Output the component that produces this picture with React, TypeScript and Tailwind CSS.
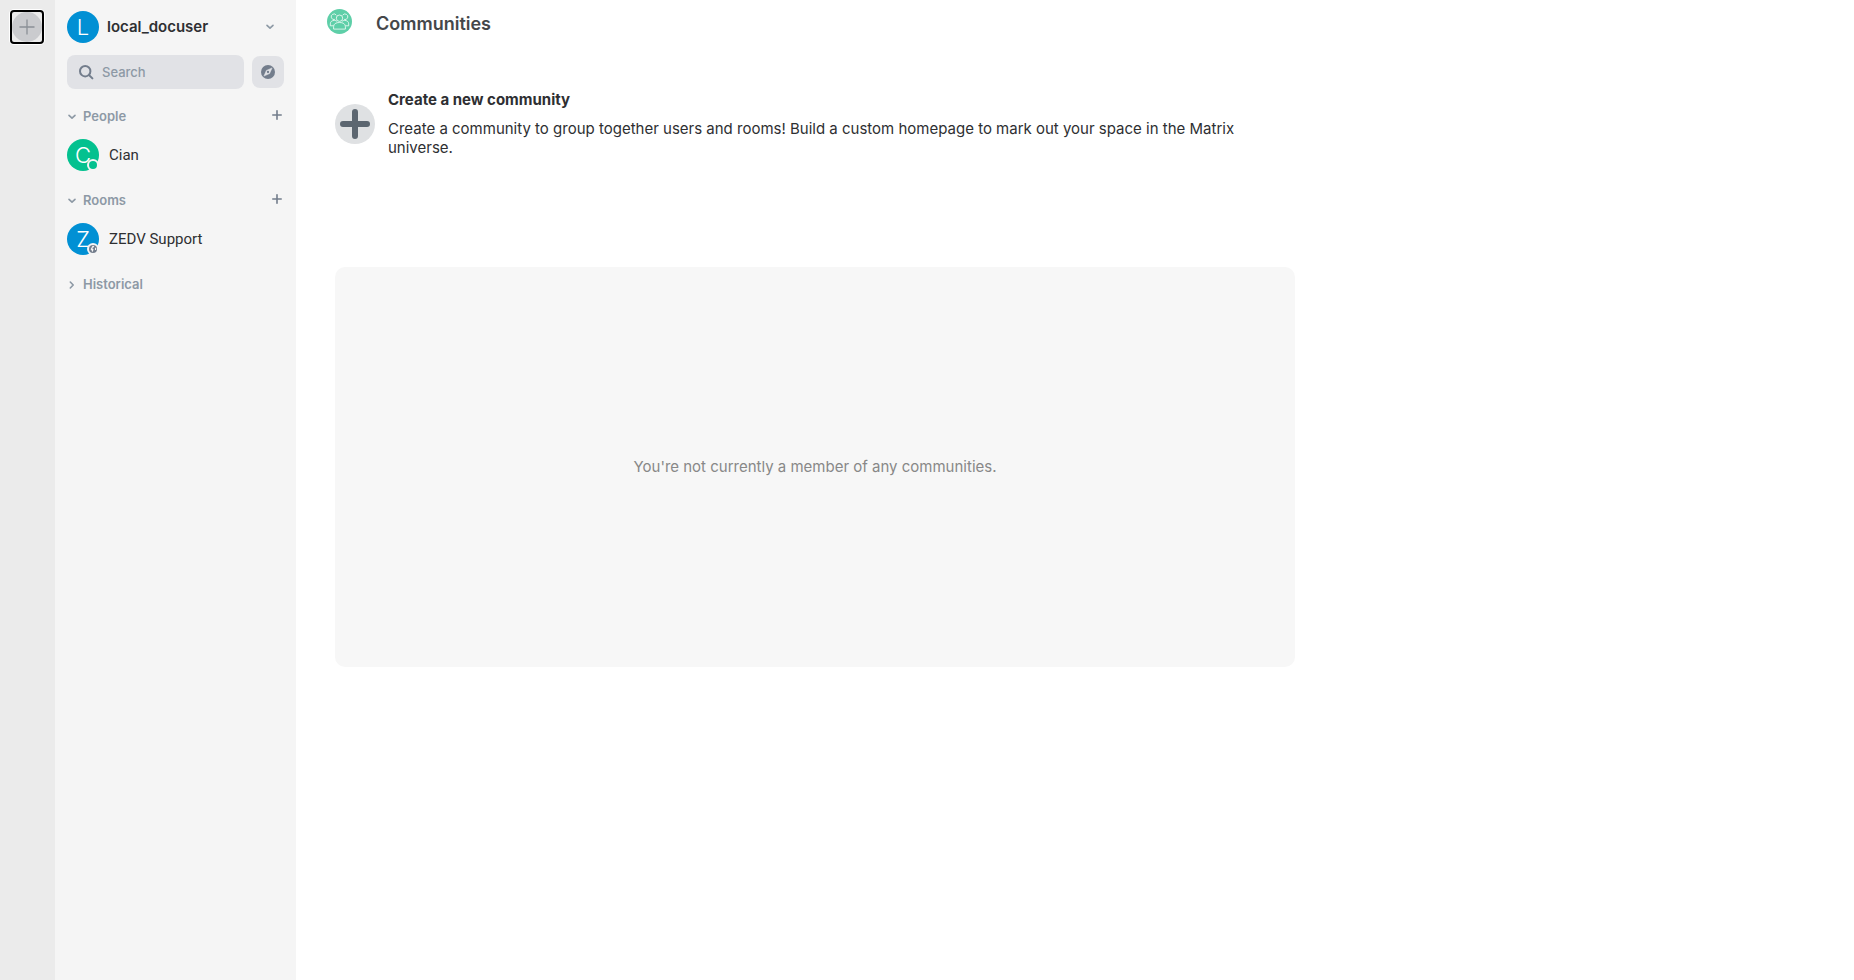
import { useState } from "react";
import type { ReactNode } from "react";

function ChevronIcon({ open = true }: { open?: boolean }) {
  return (
    <svg
      viewBox="0 0 10 10"
      className={open ? "size-[10px] shrink-0" : "size-[10px] shrink-0 -rotate-90"}
      fill="none"
      stroke="currentColor"
      strokeWidth="1.6"
      strokeLinecap="round"
      strokeLinejoin="round"
    >
      <path d="M2 3.3 5 6.2 8 3.3" />
    </svg>
  );
}

function PlusIcon() {
  return (
    <svg viewBox="0 0 10 10" className="size-[10px]" fill="none" stroke="currentColor" strokeWidth="1.6" strokeLinecap="round">
      <path d="M5 .8v8.4M.8 5h8.4" />
    </svg>
  );
}

function SearchIcon() {
  return (
    <svg viewBox="0 0 16 16" className="size-4 shrink-0 text-[#737d8c]" fill="none" stroke="currentColor" strokeWidth="2" strokeLinecap="round">
      <circle cx="7.2" cy="7.2" r="5.2" />
      <path d="m11.2 11.2 3.2 3.2" />
    </svg>
  );
}

function CompassIcon() {
  return (
    <svg viewBox="0 0 14 14" className="size-[14px]">
      <circle cx="7" cy="7" r="7" fill="#737d8c" />
      <path d="M11.1 2.9 8.6 8.6 2.9 11.1 5.4 5.4Z" fill="#e1e2e6" stroke="#e1e2e6" strokeWidth=".5" strokeLinejoin="round" />
      <circle cx="7" cy="7" r="1.15" fill="#737d8c" />
    </svg>
  );
}

function GlobeIcon() {
  return (
    <svg viewBox="0 0 8 8" className="size-2">
      <circle cx="4" cy="4" r="4" fill="#737d8c" />
      <path d="M3.6.8 5.2 1 4.8 2.2 3.6 2.8 3.4 3.6 4.6 4.4 4.2 5.6 3.2 7.2 2.6 5.2 1.6 4.2Z" fill="#f5f5f5" />
      <path d="M6 2.6 7.2 3.2 7 4.9 6 5Z" fill="#f5f5f5" />
    </svg>
  );
}

function CommunitiesIcon() {
  return (
    <svg viewBox="0 0 25 25" className="size-[25px] shrink-0" fill="none" stroke="#fff" strokeOpacity=".85" strokeWidth=".9" strokeLinejoin="round">
      <circle cx="12.5" cy="12.5" r="12.5" fill="#5ecfa8" stroke="none" />
      <circle cx="12.5" cy="9.2" r="3.2" />
      <path d="M6.6 20.1v-2.4c0-2.9 2.4-4.2 5.9-4.2s5.9 1.3 5.9 4.2v2.4Z" />
      <path d="M9.4 6.3A2.8 2.8 0 1 0 7.9 10.4M15.6 6.3A2.8 2.8 0 1 1 17.1 10.4" />
      <path d="M6.5 16.8H3.3v-1.9c0-2.2 1.6-3.4 4-3.5 1.2 0 2 .3 2.6 .9M18.5 16.8H21.7v-1.9c0-2.2-1.6-3.4-4-3.5-1.2 0-2 .3-2.6 .9" />
    </svg>
  );
}

function Avatar({ letter, color, children }: { letter: string; color: string; children?: ReactNode }) {
  return (
    <span
      className={`relative flex size-8 shrink-0 items-center justify-center rounded-full text-[22px] leading-8 font-light text-white ${color}`}
    >
      {letter}
      {children && (
        <span className="absolute right-0 bottom-0 flex size-3 items-center justify-center rounded-full bg-[#f5f5f5]">
          {children}
        </span>
      )}
    </span>
  );
}

function RoomSection({ title, children }: { title: string; children: ReactNode }) {
  const [open, setOpen] = useState(true);

  return (
    <section className="mb-[14px]">
      <div className="flex h-6 items-center justify-between pr-[2px]">
        <button onClick={() => setOpen(!open)} className="flex items-center gap-[6px] text-[13px] font-semibold text-[#8d99a5]">
          <ChevronIcon open={open} />
          {title}
        </button>
        <button aria-label={`Add to ${title}`} className="pb-1 text-[#737d8c]">
          <PlusIcon />
        </button>
      </div>
      {open && children}
    </section>
  );
}

function RoomTile({ name, avatar }: { name: string; avatar: ReactNode }) {
  return (
    <button className="mt-[6px] flex h-10 w-full items-center gap-[10px] text-left text-[15px] text-[#2e2f32]">
      {avatar}
      <span className="font-['Roboto',sans-serif]">{name}</span>
    </button>
  );
}

function LeftPanel() {
  return (
    <aside className="w-[241px] shrink-0 bg-[#f5f5f5] px-3 pt-[11px]">
      <button className="flex w-full items-center pr-[9px] text-left">
        <Avatar letter="L" color="bg-[#0190d4]" />
        <span className="ml-2 flex-1 text-[15px] font-semibold text-[#2e2f32]">local_docuser</span>
        <span className="text-[#8d99a5]">
          <ChevronIcon />
        </span>
      </button>

      <div className="mt-3 mb-4 flex items-center gap-2">
        <label className="flex h-[34px] min-w-0 flex-1 items-center gap-2 rounded-lg bg-[#e1e2e6] pl-[11px]">
          <SearchIcon />
          <input
            type="text"
            placeholder="Search"
            aria-label="Search"
            className="w-full min-w-0 bg-transparent pt-px text-[13px] font-medium text-[#2e2f32] outline-none placeholder:text-[#8d99a5]"
          />
        </label>
        <button aria-label="Explore rooms" className="flex size-8 items-center justify-center rounded-lg bg-[#e1e2e6]">
          <CompassIcon />
        </button>
      </div>

      <RoomSection title="People">
        <RoomTile
          name="Cian"
          avatar={
            <Avatar letter="C" color="bg-[#03c18f]">
              <span className="size-2 rounded-full bg-[#03c18f]" />
            </Avatar>
          }
        />
      </RoomSection>
      <RoomSection title="Rooms">
        <RoomTile
          name="ZEDV Support"
          avatar={
            <Avatar letter="Z" color="bg-[#0190d4]">
              <GlobeIcon />
            </Avatar>
          }
        />
      </RoomSection>
      <button className="flex h-6 items-center gap-[6px] text-[13px] font-semibold text-[#8d99a5]">
        <ChevronIcon open={false} />
        Historical
      </button>
    </aside>
  );
}

export default function App() {
  return (
    <div className="flex min-h-screen bg-white font-['Inter',sans-serif]">
      <nav className="w-[55px] shrink-0 bg-[#ebebeb] pt-[10px] pl-[10px]">
        <button
          aria-label="Create community"
          className="flex size-[34px] items-center justify-center rounded border-2 border-black bg-[#ebebeb] ring-1 ring-white"
        >
          <span className="flex size-[30px] items-center justify-center rounded-full bg-[#cacbce]">
            <svg viewBox="0 0 16 16" className="size-4" fill="none" stroke="#8a9096" strokeWidth="1.3">
              <path d="M8 .5v15M.5 8h15" />
            </svg>
          </span>
        </button>
      </nav>

      <LeftPanel />

      <main className="min-w-0 flex-1">
        <div className="max-w-[999px] pl-[31px] text-[15px] text-[#2e2f32]">
          <header className="flex items-start gap-6 pt-[9px]">
            <CommunitiesIcon />
            <h1 className="text-[18px] leading-[30px] font-semibold text-[#45474a]">Communities</h1>
          </header>

          <div className="ml-2">
            <div className="mt-[51px] flex items-center gap-[13px]">
              <button aria-label="Create a new community" className="shrink-0">
                <svg viewBox="0 0 40 40" className="size-10" fill="none">
                  <circle cx="20" cy="20" r="20" fill="#dfe1e3" />
                  <path d="M20 8v24M8 20h24" stroke="#5c6670" strokeWidth="6" strokeLinecap="round" />
                </svg>
              </button>
              <div className="pr-10">
                <h2 className="leading-[19px] font-bold">Create a new community</h2>
                <p className="mt-[10px] leading-[19px]">
                  Create a community to group together users and rooms! Build a custom homepage to mark out your space in the Matrix
                  universe.
                </p>
              </div>
            </div>

            <div className="mt-[110px] flex h-[400px] items-center justify-center rounded-[10px] bg-[#f7f7f7] text-[#888]">
              You're not currently a member of any communities.
            </div>
          </div>
        </div>
      </main>
    </div>
  );
}
